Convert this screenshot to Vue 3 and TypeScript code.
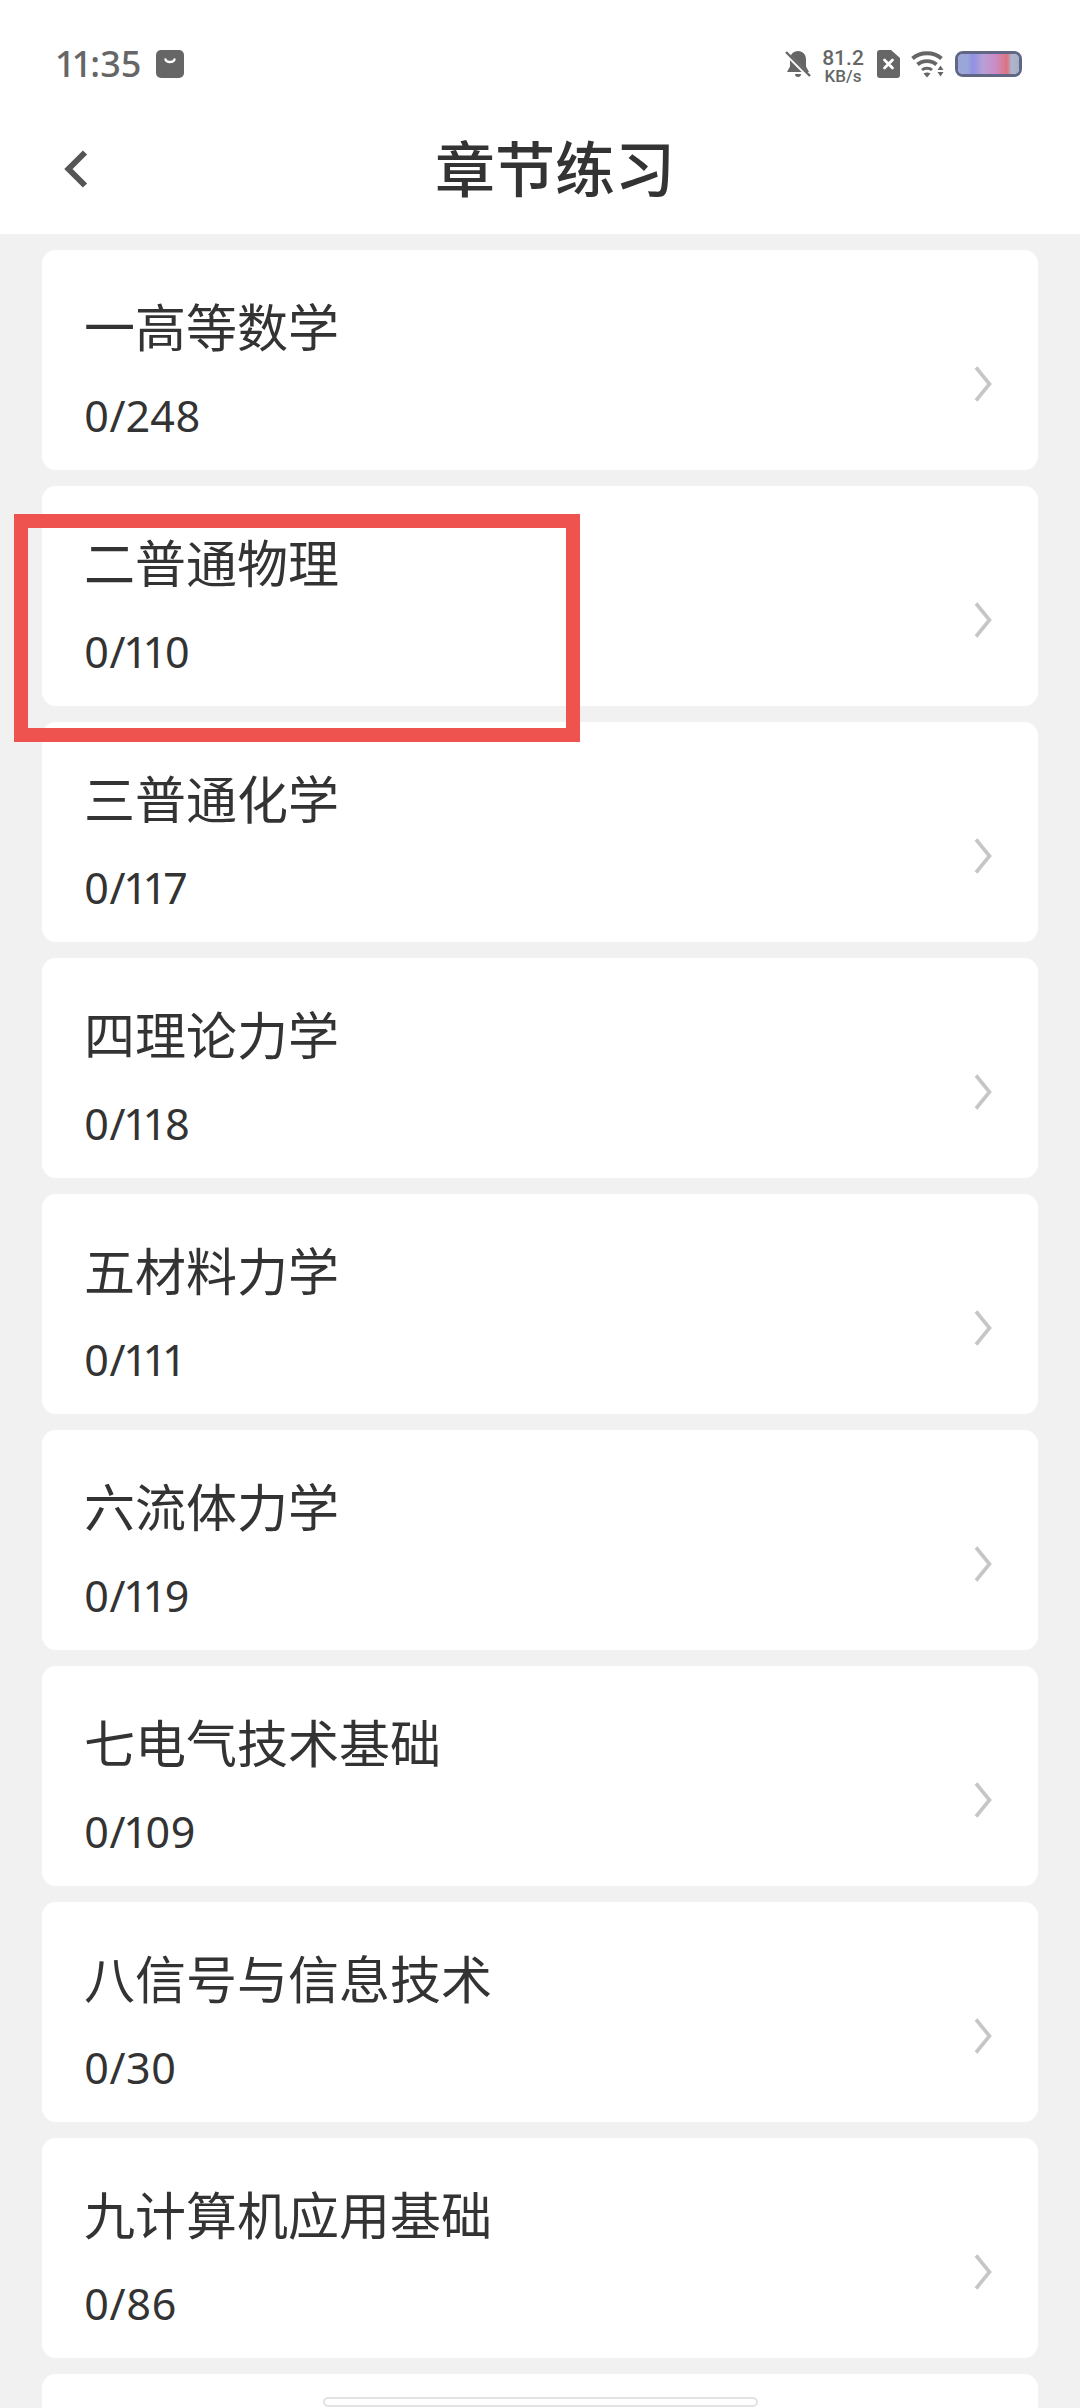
<script setup lang="ts">
interface Chapter { name: string; count: string }
const chapters: Chapter[] = [
  { name: '一高等数学', count: '0/248' },
  { name: '二普通物理', count: '0/110' },
  { name: '三普通化学', count: '0/117' },
  { name: '四理论力学', count: '0/118' },
  { name: '五材料力学', count: '0/111' },
  { name: '六流体力学', count: '0/119' },
  { name: '七电气技术基础', count: '0/109' },
  { name: '八信号与信息技术', count: '0/30' },
  { name: '九计算机应用基础', count: '0/86' },
  { name: '', count: '' },
]
</script>

<template>
  <div class="page">
    <header class="top">
      <div class="status">
        <div class="status-left">
          <span class="time">11:35</span>
          <svg class="bag" viewBox="0 0 28 28" width="28" height="28">
            <rect width="28" height="28" rx="5" fill="#666" />
            <path d="M9.5 9.5c1 3.4 8 3.4 9 0" fill="none" stroke="#fff" stroke-width="2.4" stroke-linecap="round" />
          </svg>
        </div>
        <div class="status-right">
          <svg class="bell" viewBox="0 0 26 28" width="26" height="28">
            <path d="M13 1c5 0 8 3.600 8 8.500v7l3 5.500H2l3-5.500v-7C5 4.600 8 1 13 1z" fill="#666" />
            <path d="M10 24h6a3 3 0 0 1-6 0z" fill="#666" />
            <path d="M1 3.500l24 24" stroke="#fff" stroke-width="4" />
            <path d="M1 2l24 24" stroke="#666" stroke-width="2.400" />
          </svg>
          <div class="speed"><span class="speed-val">81.2</span><span class="speed-unit">KB/s</span></div>
          <svg class="sim" viewBox="0 0 23 28" width="23" height="28">
            <path d="M3 0h11l9 8v17a3 3 0 0 1-3 3H3a3 3 0 0 1-3-3V3a3 3 0 0 1 3-3z" fill="#666" />
            <path d="M7.500 10l8 8M15.500 10l-8 8" stroke="#fff" stroke-width="2.800" stroke-linecap="round" />
          </svg>
          <svg class="wifi" viewBox="0 0 34 28" width="34" height="28">
            <path d="M1.500 8.500C9 1.500 23 1.500 30.500 8.500" fill="none" stroke="#666" stroke-width="3.800" />
            <path d="M6.500 14.500c5-4.600 14-4.600 19 0" fill="none" stroke="#666" stroke-width="3.800" />
            <path d="M11 20c2.600-2.300 7.400-2.300 10 0" fill="none" stroke="#666" stroke-width="3" />
            <path d="M12.500 23.500c2-1.400 5-1.400 7 0L16 27.500z" fill="#666" />
            <path d="M29.500 15.500l3 4.500h-6zM26.500 22h6l-3 4.500z" fill="#666" />
          </svg>
          <div class="battery"><div class="battery-fill"></div></div>
        </div>
      </div>
      <nav class="nav">
        <svg class="back" viewBox="0 0 24 38" width="24" height="38">
          <path d="M21 2.500L4.500 19 21 35.500" fill="none" stroke="#555" stroke-width="6" />
        </svg>
        <h1 class="title">章节练习</h1>
      </nav>
    </header>

    <main class="list">
      <section v-for="(c, i) in chapters" :key="i" class="card">
        <div v-if="c.name" class="card-text">
          <div class="name">{{ c.name }}</div>
          <div class="count">{{ c.count }}</div>
        </div>
        <svg v-if="c.name" class="chev" viewBox="0 0 18 36" width="18" height="36">
          <path d="M2 1.500L15.500 18 2 34.500" fill="none" stroke="#c6c6c6" stroke-width="3.600" />
        </svg>
      </section>
    </main>

    <div class="mark"></div>
    <div class="home"></div>
  </div>
</template>

<style>
html, body { margin: 0; padding: 0; background: #f1f1f1; }
</style>

<style scoped>
.page {
  position: relative;
  width: 1080px;
  height: 2408px;
  overflow: hidden;
  background: #f1f1f1;
  font-family: "Noto Sans CJK SC", "Noto Sans", sans-serif;
  color: #333;
}
.top { background: #fff; height: 234px; }
.status {
  height: 100px;
  box-sizing: border-box;
  padding: 0 58px 0 57px;
  display: flex;
  justify-content: space-between;
  align-items: flex-start;
}
.status-left { display: flex; align-items: center; gap: 15px; margin-top: 50px; height: 28px; }
.time {
  font-family: "Noto Sans", sans-serif;
  font-size: 36px;
  font-weight: 500;
  font-variant-numeric: proportional-nums;
  color: #666;
  line-height: 28px;
}
.bag { display: block; }
.status-right { display: flex; align-items: center; margin-top: 50px; height: 28px; }
.status-right svg { display: block; flex: none; }
.bell { margin-right: 10px; }
.speed {
  width: 44px;
  margin-right: 12px;
  display: flex;
  flex-direction: column;
  align-items: center;
  font-family: "Roboto", sans-serif;
  font-weight: 500;
  color: #666;
  margin-top: 4px;
}
.speed-val { font-size: 21px; line-height: 20px; }
.speed-unit { font-size: 17px; line-height: 17px; }
.wifi { margin-left: 11px; margin-right: 10px; }
.battery {
  width: 67px;
  height: 26px;
  box-sizing: border-box;
  border: 3px solid #5f6784;
  border-radius: 8px;
  overflow: hidden;
}
.battery-fill {
  height: 100%;
  background: linear-gradient(90deg, #99a6d8 0%, #99a6d8 15%, #9090e4 25%, #b7a0d6 40%, #cb8cc6 62%, #d87a90 76%, #dc7080 80%, #aeb8cc 88%, #a6aec6 100%);
}
.nav {
  position: relative;
  height: 134px;
  display: flex;
  align-items: center;
  padding: 0 0 0 64px;
}
.back { display: block; flex: none; margin-top: 4px; }
.title {
  margin: -3px 0 0 347px;
  font-size: 60px;
  font-weight: 500;
  line-height: 70px;
  color: #333;
}
.list {
  padding: 16px 42px 0;
  display: flex;
  flex-direction: column;
  gap: 16px;
}
.card {
  flex: none;
  height: 220px;
  box-sizing: border-box;
  background: #fff;
  border-radius: 14px;
  padding: 0 46px 0 42px;
  display: flex;
  justify-content: space-between;
}
.card-text { padding-top: 45px; }
.name { font-size: 51px; line-height: 60px; color: #333; }
.count {
  font-family: "Noto Sans", sans-serif;
  font-size: 43px;
  font-variant-numeric: proportional-nums;
  letter-spacing: 0.4px;
  line-height: 50px;
  margin-top: 36px;
  color: #333;
}
.chev { display: block; margin-top: 116px; }
.mark {
  position: absolute;
  left: 14px;
  top: 514px;
  width: 566px;
  height: 228px;
  box-sizing: border-box;
  border: 14px solid #ef5350;
}
.home {
  position: absolute;
  left: 323px;
  top: 2397px;
  width: 435px;
  height: 10px;
  box-sizing: border-box;
  background: #fff;
  border: 2px solid #e2e2e2;
  border-radius: 5px;
}
</style>
